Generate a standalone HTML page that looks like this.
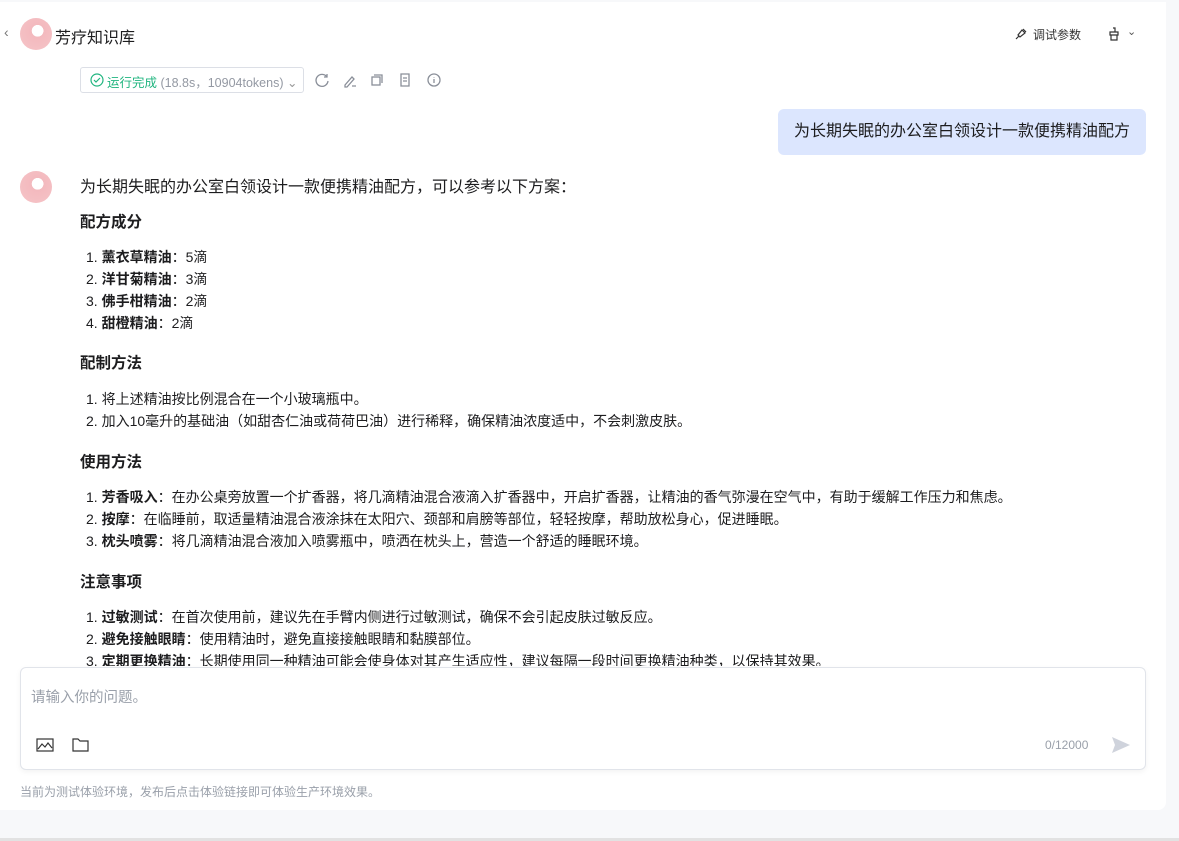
<!DOCTYPE html>
<html><head><meta charset="utf-8"><style>
*{margin:0;padding:0;box-sizing:border-box}
body{width:1179px;height:841px;background:#f7f8fa;font-family:"Liberation Sans","Noto Sans CJK SC",sans-serif;color:#1d1d1f;position:relative;overflow:hidden}
.card{position:absolute;left:0;top:2px;width:1166px;height:808px;background:#fff;border-radius:0 0 8px 0}
.abs{position:absolute;white-space:nowrap}
.avatar{border-radius:50%;background:radial-gradient(circle at 55% 40%,#fff 0 22%,#f3b9be 23%,#f6c5c8 100%);overflow:hidden}
h4{position:absolute;left:80px;font-size:15.5px;font-weight:bold}
ol{position:absolute;left:86px;font-size:14px;line-height:22px;list-style:none;white-space:nowrap}
b{font-weight:bold}
.ico{stroke:#8a8f99;fill:none;stroke-width:1.3}
</style></head><body>
<div class="card"></div>
<div class="abs" style="left:4px;top:24px;font-size:14px;color:#777">‹</div>
<div class="abs avatar" style="left:20px;top:18px;width:32px;height:32px"></div>
<div class="abs" style="left:55px;top:24px;font-size:16px">芳疗知识库</div>
<svg class="abs" style="left:1014px;top:27px" width="14" height="14" viewBox="0 0 14 14"><path d="M2 12l3-3M5 9l-1-1 4-5 3 3-5 4zM9 2l3 3" stroke="#333" fill="none" stroke-width="1.2"/></svg>
<div class="abs" style="left:1033px;top:26px;font-size:12px;color:#333">调试参数</div>
<svg class="abs" style="left:1108px;top:27px" width="12" height="14" viewBox="0 0 12 14"><path d="M5 1h2v4M2 5h8v3H2zM3 8v5h6V8" stroke="#333" fill="none" stroke-width="1.2"/></svg>
<div class="abs" style="left:1127px;top:25px;font-size:11px;color:#555">⌄</div>
<div class="abs" style="left:80px;top:67px;width:224px;height:26px;border:1px solid #dcdfe6;border-radius:3px"></div>
<svg class="abs" style="left:90px;top:73px" width="14" height="14" viewBox="0 0 14 14"><circle cx="7" cy="7" r="6" stroke="#20b57f" fill="none" stroke-width="1.2"/><path d="M4 7l2 2 4-4" stroke="#20b57f" fill="none" stroke-width="1.2"/></svg>
<div class="abs" style="left:107px;top:72px;font-size:12.5px;color:#20b57f">运行完成 <span style="color:#9499a3">(18.8s，10904tokens)</span> <span style="color:#999">⌄</span></div>
<svg class="abs" style="left:314px;top:72px" width="136" height="16" viewBox="0 0 136 16"><g class="ico"><path d="M13 5a6 6 0 1 0 1 4M13 2v3h-3"/><path d="M31 13l7-8 2 2-7 8h-2zM38 14h4"/><rect x="58" y="5" width="8" height="8"/><path d="M60 3h8v8"/><path d="M87 2h8v12h-8zM89 6h4M89 9h4"/><circle cx="120" cy="8" r="6"/><path d="M120 7v4M120 5v0.5"/></g></svg>
<div class="abs" style="left:778px;top:109px;width:368px;height:46px;background:#dce6fe;border-radius:6px;font-size:16px;line-height:46px;padding-left:16px">为长期失眠的办公室白领设计一款便携精油配方</div>
<div class="abs avatar" style="left:20px;top:171px;width:32px;height:32px"></div>
<div class="abs" style="left:80px;top:173px;font-size:16px">为长期失眠的办公室白领设计一款便携精油配方，可以参考以下方案：</div>
<h4 style="top:210px">配方成分</h4>
<ol style="top:246px"><li>1. <b>薰衣草精油</b>：5滴</li><li>2. <b>洋甘菊精油</b>：3滴</li><li>3. <b>佛手柑精油</b>：2滴</li><li>4. <b>甜橙精油</b>：2滴</li></ol>
<h4 style="top:351px">配制方法</h4>
<ol style="top:388px"><li>1. 将上述精油按比例混合在一个小玻璃瓶中。</li><li>2. 加入10毫升的基础油（如甜杏仁油或荷荷巴油）进行稀释，确保精油浓度适中，不会刺激皮肤。</li></ol>
<h4 style="top:450px">使用方法</h4>
<ol style="top:486px"><li>1. <b>芳香吸入</b>：在办公桌旁放置一个扩香器，将几滴精油混合液滴入扩香器中，开启扩香器，让精油的香气弥漫在空气中，有助于缓解工作压力和焦虑。</li><li>2. <b>按摩</b>：在临睡前，取适量精油混合液涂抹在太阳穴、颈部和肩膀等部位，轻轻按摩，帮助放松身心，促进睡眠。</li><li>3. <b>枕头喷雾</b>：将几滴精油混合液加入喷雾瓶中，喷洒在枕头上，营造一个舒适的睡眠环境。</li></ol>
<h4 style="top:570px">注意事项</h4>
<ol style="top:606px;height:60px;overflow:hidden"><li>1. <b>过敏测试</b>：在首次使用前，建议先在手臂内侧进行过敏测试，确保不会引起皮肤过敏反应。</li><li>2. <b>避免接触眼睛</b>：使用精油时，避免直接接触眼睛和黏膜部位。</li><li>3. <b>定期更换精油</b>：长期使用同一种精油可能会使身体对其产生适应性，建议每隔一段时间更换精油种类，以保持其效果。</li></ol>
<div class="abs" style="left:20px;top:667px;width:1126px;height:103px;background:#fff;border:1px solid #e1e4ea;border-radius:6px;box-shadow:0 2px 6px rgba(0,0,0,.05)"></div>
<div class="abs" style="left:31px;top:686px;font-size:14.5px;color:#9aa0aa">请输入你的问题。</div>
<svg class="abs" style="left:36px;top:737px" width="56" height="16" viewBox="0 0 56 16"><g stroke="#333" fill="none" stroke-width="1.2"><rect x="1" y="2" width="16" height="12"/><path d="M2 12l4-5 3 3 3-4 4 5"/><path d="M37 2h5l2 2h8v10H37z"/></g></svg>
<div class="abs" style="left:1045px;top:738px;font-size:12px;color:#9aa0aa">0/12000</div>
<svg class="abs" style="left:1111px;top:735px" width="20" height="20" viewBox="0 0 20 20"><path d="M1 2l18 8-18 8 3-8z" fill="#cfd3dc"/></svg>
<div class="abs" style="left:20px;top:783px;font-size:12px;color:#9aa0aa">当前为测试体验环境，发布后点击体验链接即可体验生产环境效果。</div>
<div class="abs" style="left:0;top:838px;width:1179px;height:3px;background:#e2e2e2"></div>
</body></html>
